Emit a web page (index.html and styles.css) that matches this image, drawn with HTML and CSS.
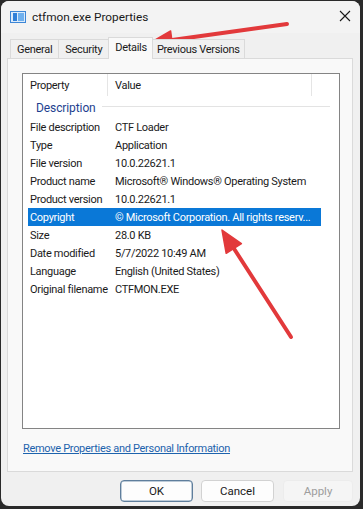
FILE: index.html
```html
<!DOCTYPE html>
<html>
<head>
<meta charset="utf-8">
<link rel="stylesheet" href="styles.css">
</head>
<body>
<div class="window">
  <div class="titlebar">
    <svg class="appicon" width="16" height="12" viewBox="0 0 16 12">
      <rect x="0.5" y="0.5" width="15" height="11" fill="#dcebfa" stroke="#3d86d6"/>
      <rect x="3" y="2" width="4" height="8" fill="#2f7fd8"/>
      <rect x="8" y="2" width="6" height="8" fill="#6fb0ee"/>
    </svg>
    <span class="title">ctfmon.exe Properties</span>
    <svg class="close" width="12" height="12" viewBox="0 0 12 12">
      <path d="M1 1 L11 11 M11 1 L1 11" stroke="#1a1a1a" stroke-width="1.1" fill="none"/>
    </svg>
  </div>
  <div class="tabs">
    <div class="tab">General</div>
    <div class="tab">Security</div>
    <div class="tab active">Details</div>
    <div class="tab last">Previous Versions</div>
  </div>
  <div class="panel">
    <div class="list">
      <div class="header">
        <div class="hcell hprop">Property</div>
        <div class="hcell hval">Value</div>
        <div class="hcell hrest"></div>
      </div>
      <div class="group">
        <span class="gname">Description</span>
        <span class="gline"></span>
      </div>
      <div class="row"><span class="k">File description</span><span class="v">CTF Loader</span></div>
      <div class="row"><span class="k">Type</span><span class="v">Application</span></div>
      <div class="row"><span class="k">File version</span><span class="v">10.0.22621.1</span></div>
      <div class="row"><span class="k">Product name</span><span class="v">Microsoft® Windows® Operating System</span></div>
      <div class="row"><span class="k">Product version</span><span class="v">10.0.22621.1</span></div>
      <div class="row sel"><span class="k">Copyright</span><span class="v">© Microsoft Corporation. All rights reserv...</span></div>
      <div class="row"><span class="k">Size</span><span class="v">28.0 KB</span></div>
      <div class="row"><span class="k">Date modified</span><span class="v">5/7/2022 10:49 AM</span></div>
      <div class="row"><span class="k">Language</span><span class="v">English (United States)</span></div>
      <div class="row"><span class="k">Original filename</span><span class="v">CTFMON.EXE</span></div>
    </div>
    <a class="link" href="#">Remove Properties and Personal Information</a>
  </div>
  <div class="buttons">
    <div class="btn ok">OK</div>
    <div class="btn cancel">Cancel</div>
    <div class="btn disabled">Apply</div>
  </div>
</div>
<svg class="arrows" width="363" height="509" viewBox="0 0 363 509">
  <g fill="#e2393b" stroke="#e2393b" stroke-linejoin="round">
    <line x1="287" y1="24" x2="165" y2="41" stroke-width="4" stroke-linecap="round"/>
    <polygon points="150,43 170.6,31 173,49" stroke-width="1.5"/>
    <line x1="291" y1="337" x2="231" y2="244" stroke-width="4" stroke-linecap="round"/>
    <polygon points="222,230 241.4,243.7 226.2,253.3" stroke-width="1.5"/>
  </g>
</svg>
</body>
</html>
```

FILE: styles.css
```css
html, body {
  margin: 0;
  padding: 0;
}
body {
  background: #2a2a2a;
  width: 363px;
  height: 509px;
  overflow: hidden;
  position: relative;
  font-family: Roboto, "Liberation Sans", sans-serif;
  font-size: 11px;
  letter-spacing: -0.3px;
  color: #1a1a1a;
}
.window {
  width: 359px;
  height: 505px;
  margin: 1px 0 0 1px;
  border-radius: 8px;
  background: #f0f0f0;
  overflow: hidden;
  display: flex;
  flex-direction: column;
}
.titlebar {
  height: 32px;
  flex: none;
  display: flex;
  align-items: center;
  padding-left: 9px;
  padding-right: 9px;
  background: #f3f3f3;
}
.appicon {
  flex: none;
  margin-top: -1px;
}
.title {
  margin-left: 6px;
  font-family: Roboto, sans-serif;
  font-size: 11.8px;
  letter-spacing: 0;
  color: #1a1a1a;
  flex: 1;
}
.close {
  flex: none;
  margin-top: -2px;
}
.tabs {
  height: 25px;
  flex: none;
  display: flex;
  align-items: flex-end;
  padding-left: 9px;
  position: relative;
  z-index: 1;
}
.tab {
  height: 18px;
  border: 1px solid #dadada;
  border-bottom: none;
  border-right: none;
  background: #f0f0f0;
  padding: 0 6px;
  line-height: 19px;
  font-size: 11px;
}
.tab.last {
  border-right: 1px solid #dadada;
  padding: 0 4px;
}
.tab.active {
  height: 21px;
  margin-bottom: -1px;
  background: #f9f9f9;
  border-right: 1px solid #dadada;
  line-height: 20px;
  padding: 0 5px 0 6px;
}
.tab.active + .tab {
  border-left: none;
}
.panel {
  flex: none;
  height: 398px;
  margin: 0 7px 0 6px;
  border: 1px solid #dadada;
  background: #f9f9f9;
  padding: 14px 12px 0 14px;
  display: flex;
  flex-direction: column;
}
.list {
  height: 354px;
  border: 1px solid #848484;
  background: #ffffff;
  flex: none;
}
.header {
  height: 22px;
  display: flex;
  align-items: stretch;
}
.hcell {
  display: flex;
  align-items: center;
  padding-left: 7px;
}
.hprop {
  width: 77px;
  border-right: 1px solid #e5e5e5;
}
.hval {
  width: 196px;
  border-right: 1px solid #e5e5e5;
}
.group {
  height: 22px;
  display: flex;
  align-items: center;
  padding-left: 13px;
}
.gname {
  color: #1e3f8f;
  font-size: 12px;
  letter-spacing: -0.1px;
  margin-top: 1px;
}
.gline {
  margin-left: 6px;
  width: 228px;
  height: 1px;
  background: #e3e3e3;
  margin-top: -1px;
}
.row {
  height: 18px;
  width: 293px;
  margin-left: 5px;
  display: flex;
  align-items: center;
  white-space: nowrap;
}
.row .k {
  width: 85px;
  padding-left: 2px;
  flex: none;
}
.row .v {
  flex: none;
}
.row.sel {
  background: #0a78d7;
  color: #ffffff;
}
.link {
  margin-top: 13px;
  margin-left: 1px;
  color: #1d63ad;
  text-decoration: underline;
  font-size: 11px;
  align-self: flex-start;
}
.buttons {
  display: flex;
  justify-content: flex-end;
  padding-right: 7px;
  margin-top: 8px;
}
.btn {
  width: 71px;
  height: 20px;
  border: 1px solid #d2d2d2;
  border-radius: 4px;
  background: #fdfdfd;
  display: flex;
  align-items: center;
  justify-content: center;
  font-size: 11.5px;
  letter-spacing: 0;
}
.btn.ok {
  border-color: #5f7e9c;
  box-shadow: inset 0 0 0 0.5px #7f9ab3;
}
.btn.cancel {
  margin-left: 8px;
}
.btn.disabled {
  width: 68px;
  margin-left: 9px;
  background: #f5f5f5;
  border-color: #ececec;
  color: #9d9d9d;
}
.arrows {
  position: absolute;
  left: 0;
  top: 0;
  pointer-events: none;
}
```
